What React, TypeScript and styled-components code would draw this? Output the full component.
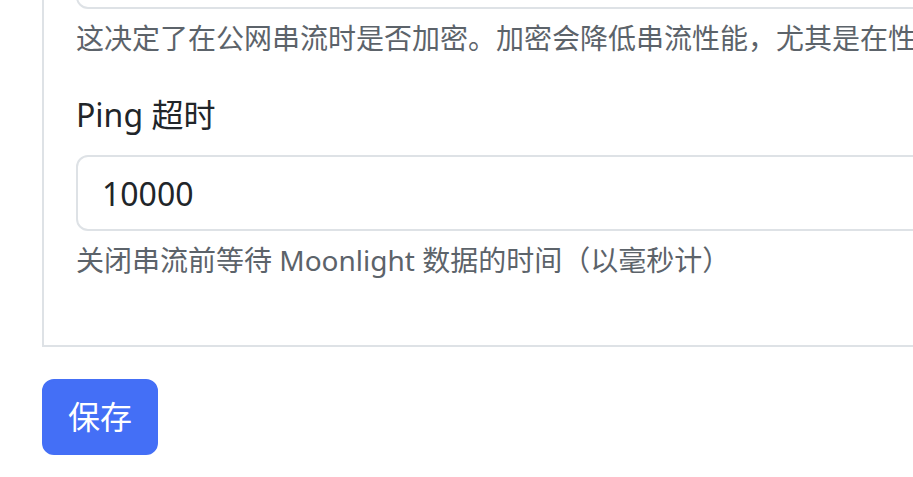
import React from "react";
import styled, { createGlobalStyle } from "styled-components";

const Global = createGlobalStyle`
  html, body { margin: 0; padding: 0; background: #fff; overflow: hidden; }
  body {
    font-family: "Noto Sans", "Noto Sans CJK SC", sans-serif;
    color: #212529;
  }
  * { box-sizing: border-box; }
`;

const Page = styled.div`
  padding: 0 0 0 42px;
  margin-top: -101px;
  width: 1400px;
`;

const Card = styled.div`
  border: 2px solid #dee2e6;
  padding: 32px;
  width: 1300px;
`;

const Group = styled.div`
  margin-bottom: 32px;
`;

const Label = styled.label`
  display: block;
  font-size: 32px;
  line-height: 48px;
  margin-bottom: 16px;
  color: #212529;
`;

const Input = styled.input`
  display: block;
  width: 100%;
  height: 76px;
  padding: 12px 24px;
  font-family: inherit;
  font-size: 32px;
  line-height: 48px;
  color: #212529;
  background: #fff;
  border: 2px solid #dee2e6;
  border-radius: 12px;
  outline: none;
`;

const Help = styled.div`
  margin-top: 8px;
  font-size: 28px;
  line-height: 42px;
  color: #5c636a;
  white-space: nowrap;
`;

const SaveButton = styled.button`
  margin-top: 32px;
  height: 76px;
  padding: 12px 24px;
  font-family: inherit;
  font-size: 32px;
  line-height: 48px;
  color: #fff;
  background: #446ff6;
  border: 2px solid #446ff6;
  border-radius: 12px;
`;

export default function App() {
  return (
    <>
      <Global />
      <Page>
        <Card>
          <Group>
            <Input defaultValue="" readOnly />
            <Help>这决定了在公网串流时是否加密。加密会降低串流性能，尤其是在性能较弱的主机和客户端上。</Help>
          </Group>
          <Group>
            <Label>Ping 超时</Label>
            <Input defaultValue="10000" readOnly />
            <Help>关闭串流前等待 Moonlight 数据的时间（以毫秒计）</Help>
          </Group>
        </Card>
        <SaveButton>保存</SaveButton>
      </Page>
    </>
  );
}
